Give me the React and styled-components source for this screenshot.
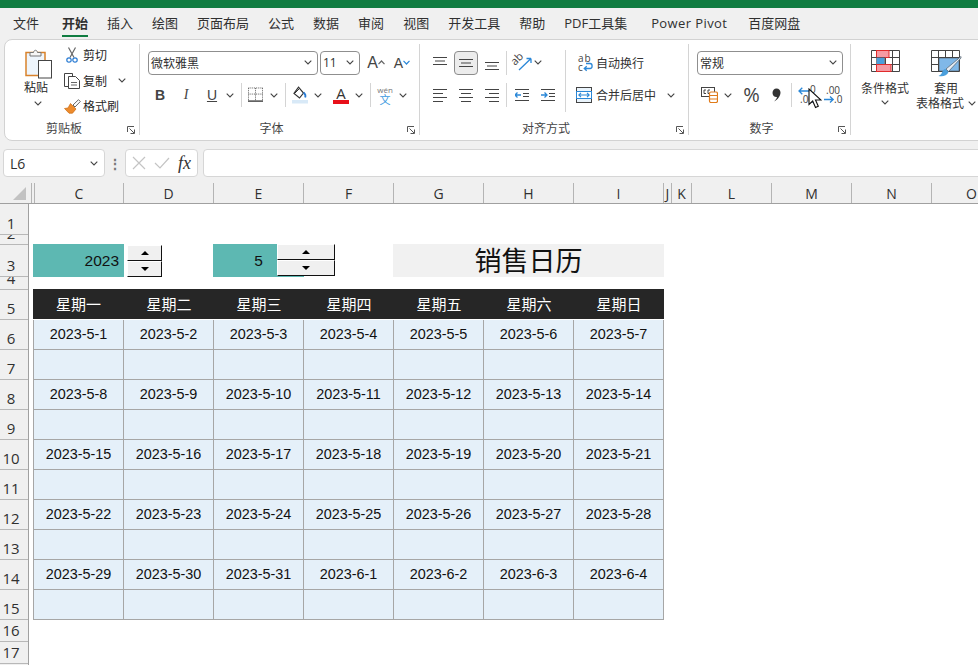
import React from 'react';
import styled, { createGlobalStyle } from 'styled-components';

const UI_FONT = '"Open Sans", "Noto Sans CJK SC", sans-serif';
const CELL_FONT = '"Liberation Sans", "Noto Sans CJK SC", sans-serif';

const GlobalStyle = createGlobalStyle`
  html, body { margin: 0; padding: 0; background: #f0f0f0; }
  body { font-family: ${UI_FONT}; color: #262626; }
`;

const TABS = [
  { name: '文件' }, { name: '开始', active: true, ml: 4 }, { name: '插入' }, { name: '绘图' },
  { name: '页面布局' }, { name: '公式' }, { name: '数据' }, { name: '审阅' }, { name: '视图' },
  { name: '开发工具' }, { name: '帮助' }, { name: 'PDF工具集' },
  { name: 'Power Pivot', ml: 5, wide: true }, { name: '百度网盘', ml: 2 },
];
const COLUMNS = [
  ['C', 89], ['D', 90], ['E', 90], ['F', 90], ['G', 90], ['H', 90], ['I', 90],
  ['J', 8], ['K', 20], ['L', 80], ['M', 80], ['N', 80], ['O', 80],
];
const ROW_HEADS = [
  [1, 31], [2, 10], [3, 32], [4, 13], [5, 30], [6, 30], [7, 30], [8, 30], [9, 30],
  [10, 30], [11, 30], [12, 30], [13, 30], [14, 30], [15, 30], [16, 22], [17, 22],
];
const WEEKDAYS = ['星期一', '星期二', '星期三', '星期四', '星期五', '星期六', '星期日'];
const WEEKS = [
  ['2023-5-1', '2023-5-2', '2023-5-3', '2023-5-4', '2023-5-5', '2023-5-6', '2023-5-7'],
  ['2023-5-8', '2023-5-9', '2023-5-10', '2023-5-11', '2023-5-12', '2023-5-13', '2023-5-14'],
  ['2023-5-15', '2023-5-16', '2023-5-17', '2023-5-18', '2023-5-19', '2023-5-20', '2023-5-21'],
  ['2023-5-22', '2023-5-23', '2023-5-24', '2023-5-25', '2023-5-26', '2023-5-27', '2023-5-28'],
  ['2023-5-29', '2023-5-30', '2023-5-31', '2023-6-1', '2023-6-2', '2023-6-3', '2023-6-4'],
];

/* ---------- icons ---------- */
const Chevron = ({ color = '#444' }) => (
  <svg width="8" height="5" viewBox="0 0 8 5"><path d="M.7.7 4 4 7.3.7" fill="none" stroke={color} strokeWidth="1.1" /></svg>
);
const PasteIcon = () => (
  <svg width="28" height="31" viewBox="0 0 28 31">
    <rect x="1" y="4.500" width="19" height="23" fill="#eef5fc" stroke="#d9822b" strokeWidth="1.500" />
    <path d="M5 8V4.500h3.500C9 1.500 12 1.500 12.500 4.500H16V8z" fill="#f6f6f6" stroke="#777" />
    <rect x="13.500" y="12.500" width="13" height="17.500" fill="#fff" stroke="#444" />
  </svg>
);
const CutIcon = () => (
  <svg width="12" height="16" viewBox="0 0 12 16">
    <path d="M2.500 .5 8 10.500M9.500 .5 4 10.500" fill="none" stroke="#666" strokeWidth="1.200" />
    <circle cx="3" cy="13" r="2.200" fill="none" stroke="#2b7cd3" strokeWidth="1.200" />
    <circle cx="9" cy="13" r="2.200" fill="none" stroke="#2b7cd3" strokeWidth="1.200" />
  </svg>
);
const CopyIcon = () => (
  <svg width="17" height="16" viewBox="0 0 17 16">
    <path d="M4 13.500H.5V.5h8V3" fill="#fff" stroke="#444" />
    <path d="M4.500 3.500h7l4 4v8h-11z" fill="#fff" stroke="#444" />
    <path d="M7 9.500h6M7 12h6" stroke="#666" />
  </svg>
);
const BrushIcon = () => (
  <svg width="17" height="15" viewBox="0 0 17 15">
    <path d="M9 6 14.500.7l1.800 1.800L11 8z" fill="#fff" stroke="#666" />
    <path d="M6.500 4.500 12 10l-3.500 4.200H5L.5 9.500 4 9z" fill="#ed8b2c" stroke="#c96a12" strokeWidth=".7" />
  </svg>
);
const BorderIcon = () => (
  <svg width="16" height="16" viewBox="0 0 16 16">
    <path d="M.5.5h15M.5.5v13M15.500.5v13M.5 7h15M8 .5v13" stroke="#555" strokeDasharray="1 1" fill="none" />
    <path d="M0 14.500h16" stroke="#222" strokeWidth="1.300" />
  </svg>
);
const FillIcon = () => (
  <svg width="16" height="18" viewBox="0 0 16 18">
    <path d="M6.500 1.200 11.500 7l-4 5L2 7.500z" fill="#fff" stroke="#333" strokeWidth="1.200" />
    <path d="M2.500 7.500 7 3" stroke="#333" />
    <path d="M13.200 11.500c.6-1.600.4-3.200-1.600-5" fill="none" stroke="#2b7cd3" strokeWidth="1.800" />
    <rect x="0" y="14" width="16" height="3.500" fill="#d8e9f7" />
  </svg>
);
const FontStepIcon = ({ up }) => (
  <svg width="7" height="5" viewBox="0 0 7 5">
    <path d={up ? 'M.5 4.200 3.500 1l3 3.200' : 'M.5.8l3 3.200 3-3.200'} fill="none" stroke={up ? '#666' : '#2b88d8'} strokeWidth="1.200" />
  </svg>
);
const Lines = ({ kind }) => {
  const sets = {
    top: [[0, 14, 1], [2, 12, 4.5], [0, 14, 8]],
    middle: [[0, 14, 3], [2, 12, 6.5], [0, 14, 10]],
    bottom: [[0, 14, 6], [2, 12, 9.5], [0, 14, 13]],
    left: [[0, 14, 1], [0, 10, 5], [0, 14, 9], [0, 10, 13]],
    center: [[0, 14, 1], [2, 12, 5], [0, 14, 9], [2, 12, 13]],
    right: [[0, 14, 1], [4, 14, 5], [0, 14, 9], [4, 14, 13]],
  };
  return (
    <svg width="14" height="14" viewBox="0 0 14 14">
      {sets[kind].map(([a, b, y]) => <path key={y} d={`M${a} ${y + 0.5}H${b}`} stroke="#444" />)}
    </svg>
  );
};
const IndentIcon = ({ right }) => (
  <svg width="14" height="12" viewBox="0 0 14 12">
    <path d="M0 .5h14M8 4.500h6M8 7.500h6M0 11.500h14" stroke="#444" />
    <path d={right ? 'M0 6h6M3.500 3.500 6 6 3.500 8.500' : 'M6 6H0M2.500 3.500 0 6l2.500 2.500'} fill="none" stroke="#2b88d8" strokeWidth="1.300" />
  </svg>
);
const OrientationIcon = () => (
  <svg width="18" height="17" viewBox="0 0 18 17" overflow="visible">
    <text x="1" y="12" fontSize="11" fill="#444" transform="rotate(-45 1 12)" fontFamily="Open Sans">ab</text>
    <path d="M5 16 17 4.500M17 4.500h-4.500M17 4.500V9" fill="none" stroke="#2b88d8" strokeWidth="1.300" />
  </svg>
);
const WrapIcon = () => (
  <svg width="15" height="17" viewBox="0 0 15 17" overflow="visible">
    <text x="0" y="8" fontSize="10" letterSpacing="1" fill="#444" fontFamily="Open Sans">ab</text>
    <text x="0" y="16.500" fontSize="10" fill="#444" fontFamily="Open Sans">c</text>
    <path d="M8 9.500h4c2.800 0 2.800 5 0 5H6.500M8.700 12.300 6.300 14.500l2.400 2.200" fill="none" stroke="#2b88d8" strokeWidth="1.300" />
  </svg>
);
const MergeIcon = () => (
  <svg width="16" height="16" viewBox="0 0 16 16">
    <rect x=".5" y=".5" width="15" height="15" fill="#eaf4fc" stroke="#444" />
    <rect x=".5" y="4.500" width="15" height="7" fill="#fff" stroke="#2b88d8" />
    <path d="M3 8h10M5 5.800 2.800 8 5 10.200M11 5.800 13.200 8 11 10.200" fill="none" stroke="#2b88d8" strokeWidth="1.100" />
  </svg>
);
const AccountingIcon = () => (
  <svg width="17" height="16" viewBox="0 0 17 16">
    <rect x=".5" y=".5" width="13" height="9" fill="#fff" stroke="#444" />
    <path d="M5 3H3v3.500h2M9 3H7v3.500h2" fill="none" stroke="#444" />
    <rect x="8.500" y="5" width="8" height="10.500" rx="1.500" fill="#fff" stroke="#e07b1a" strokeWidth="1.200" />
    <path d="M8.500 8.500h8M8.500 12h8" stroke="#e07b1a" />
  </svg>
);
const CommaIcon = () => (
  <svg width="9" height="14" viewBox="0 0 9 14">
    <path d="M4.500 .5C7 .5 8.500 2.200 8.500 4.500c0 3.500-2.500 7-6.500 9 1.500-1.500 2.700-3 3-4.500C2.500 9.300.5 7.500.5 5 .5 2.300 2.200.5 4.500.5z" fill="#333" />
  </svg>
);
const DecimalIcon = ({ more }) => (
  <svg width="17" height="18" viewBox="0 0 17 18" overflow="visible">
    {more ? (
      <>
        <path d="M11 5H1M4.300 1.700 1 5l3.300 3.300" fill="none" stroke="#2b88d8" strokeWidth="1.300" />
        <text x="12" y="7" fontSize="10" fill="#444" fontFamily="Open Sans">0</text>
        <text x="2" y="17" fontSize="10" fill="#444" fontFamily="Open Sans">.00</text>
      </>
    ) : (
      <>
        <text x="2" y="8" fontSize="10" fill="#444" fontFamily="Open Sans">.00</text>
        <path d="M0 13.500h9M6 10.500l3.200 3L6 16.500" fill="none" stroke="#2b88d8" strokeWidth="1.300" />
        <text x="10" y="17" fontSize="10" fill="#444" fontFamily="Open Sans">.0</text>
      </>
    )}
  </svg>
);
const GridLines = () => (
  <path d="M.5.5h28v21H.5zM.5 7.500h28M.5 14.500h28M7.500.5v21M14.500.5v21M21.500.5v21" fill="none" stroke="#444" />
);
const ConditionalIcon = () => (
  <svg width="29" height="22" viewBox="0 0 29 22">
    <GridLines />
    <rect x="5.500" y=".5" width="12.500" height="7" fill="#f59aa3" stroke="#e02b2b" />
    <rect x="5.500" y="7.500" width="8" height="7" fill="#4a9fdc" stroke="#444" strokeWidth=".5" />
    <rect x="5.500" y="14.500" width="14.500" height="7" fill="#f59aa3" stroke="#e02b2b" />
  </svg>
);
const TableStyleIcon = () => (
  <svg width="31" height="28" viewBox="0 0 31 28">
    <GridLines />
    <rect x="8" y="8" width="20" height="13" fill="#80b8e8" stroke="#444" strokeWidth=".5" />
    <path d="M30 6.500 15 19l2.500 2.500L30 8z" fill="#e8eef4" stroke="#5a6a78" strokeWidth=".8" />
    <path d="M14.500 19c-3 .5-3 3-4 4.500-.5 1-2 2-3 2.500 4 1 8.500 0 10-4z" fill="#4a9fdc" />
  </svg>
);
const LauncherIcon = () => (
  <svg width="8" height="8" viewBox="0 0 8 8">
    <path d="M.5 6V.5H7M2.500 2.500 7 7M3.500 7.500h4v-4" fill="none" stroke="#555" />
  </svg>
);
const CursorIcon = () => (
  <svg width="14" height="21" viewBox="0 0 14 21">
    <path d="M1 1v15.500l3.700-3.500 2.800 6.500 2.800-1.200-2.800-6.300H13z" fill="#fff" stroke="#111" strokeWidth="1.100" />
  </svg>
);
const CancelIcon = () => (
  <svg width="14" height="14" viewBox="0 0 14 14"><path d="M1 1l12 12M13 1 1 13" stroke="#c4c4c4" strokeWidth="1.200" /></svg>
);
const EnterIcon = () => (
  <svg width="16" height="12" viewBox="0 0 16 12"><path d="M1 6l5 5L15 1" fill="none" stroke="#c4c4c4" strokeWidth="1.200" /></svg>
);

/* ---------- shell ---------- */
const Page = styled.div`
  width: 978px;
  height: 665px;
  position: relative;
  overflow: hidden;
  background: #f0f0f0;
  font-size: 12px;
`;
const TitleBar = styled.div`
  height: 8px;
  background: #107c41;
`;
const TabBar = styled.div`
  height: 31px;
  display: flex;
  gap: 19px;
  padding-left: 13px;
  box-sizing: border-box;
`;
const Tab = styled.div`
  height: 27px;
  margin-left: ${p => p.$ml || 0}px;
  font-size: 13px;
  line-height: 30px;
  white-space: nowrap;
  font-weight: ${p => (p.$active ? 700 : 400)};
  letter-spacing: ${p => (p.$wide ? '.4px' : 'normal')};
  border-bottom: 2px solid ${p => (p.$active ? '#107c41' : 'transparent')};
  color: #303030;
`;
const RibbonWrap = styled.div`
  height: 102px;
  margin-left: 4px;
  width: 1000px;
  box-sizing: border-box;
  background: #fff;
  border: 1px solid #d2d2d2;
  border-radius: 8px;
  display: flex;
`;
const GroupDivider = styled.div`
  width: 1px;
  height: 91px;
  margin-top: 4px;
  background: #d4d4d4;
  flex: none;
`;
const Group = styled.section`
  width: ${p => p.$w}px;
  flex: none;
  display: flex;
  flex-direction: column;
`;
const GroupBody = styled.div`
  display: flex;
  flex-direction: ${p => (p.$row ? 'row' : 'column')};
  padding-top: ${p => p.$top ?? 10}px;
  padding-left: ${p => p.$left ?? 0}px;
  ${p => !p.$row && 'gap: 8px;'}
`;
const GroupFoot = styled.div`
  margin-top: auto;
  margin-bottom: 3px;
  height: 16px;
  display: flex;
  align-items: center;
`;
const GroupLabel = styled.div`
  flex: 1;
  text-align: center;
  font-size: 12px;
  line-height: 16px;
  color: #444;
`;
const Launcher = styled.div`
  width: 16px;
  flex: none;
  display: flex;
  justify-content: center;
  padding-top: 2px;
`;
const ToolRow = styled.div`
  display: flex;
  align-items: center;
  height: ${p => p.$h || 24}px;
`;
const Tool = styled.div`
  width: ${p => (p.$w ? `${p.$w}px` : 'auto')};
  height: 24px;
  margin-left: ${p => p.$ml || 0}px;
  flex: none;
  display: flex;
  align-items: center;
  justify-content: center;
  color: #333;
  white-space: nowrap;
`;
const ActiveTool = styled.div`
  width: 22px;
  height: 22px;
  border: 1px solid #8c8c8c;
  border-radius: 4px;
  background: #ececec;
  display: flex;
  align-items: center;
  justify-content: center;
`;
const ToolSep = styled.div`
  width: 1px;
  height: 24px;
  background: #d4d4d4;
  flex: none;
  margin-left: ${p => p.$ml ?? 6}px;
  margin-right: ${p => p.$mr ?? 6}px;
`;
const Glyph = styled.span`
  font-family: ${p => {
    if (p.$serif) return '"Liberation Serif", serif';
    return p.$ui ? '"Open Sans", sans-serif' : '"Liberation Sans", sans-serif';
  }};
  font-size: ${p => p.$size || 14}px;
  font-weight: ${p => (p.$bold ? 700 : 400)};
  font-style: ${p => (p.$italic ? 'italic' : 'normal')};
  text-decoration: ${p => (p.$under ? 'underline' : 'none')};
  color: #444;
  line-height: 1;
`;
const FontColor = styled.div`
  display: flex;
  flex-direction: column;
  align-items: center;
  width: 16px;
  font-size: 15px;
  line-height: 14px;
  color: #333;
  &::after {
    content: '';
    width: 16px;
    height: 4px;
    background: #e8101a;
    margin-top: 0;
  }
`;
const PhoneticStack = styled.div`
  display: flex;
  flex-direction: column;
  align-items: center;
  font-size: 8px;
  line-height: 8px;
  color: #777;
  & > b {
    font-size: 11px;
    font-weight: 400;
    color: #3d9be0;
    line-height: 11px;
  }
`;
const ToolText = styled.span`
  font-size: 12px;
  color: #333;
  margin-left: ${p => p.$ml || 0}px;
`;
const Select = styled.div`
  width: ${p => p.$w}px;
  height: 24px;
  margin-left: ${p => p.$ml || 0}px;
  box-sizing: border-box;
  border: 1px solid #8f8f8f;
  border-radius: 4px;
  display: flex;
  align-items: center;
  justify-content: space-between;
  padding: 0 5px 0 2px;
  font-size: 12px;
  color: #303030;
  flex: none;
  background: #fff;
`;
const PasteCol = styled.div`
  width: 58px;
  display: flex;
  flex-direction: column;
  align-items: center;
  padding-top: 5px;
  padding-left: 4px;
  box-sizing: border-box;
  font-size: 12px;
  & > svg:first-child { margin-left: 5px; }
  & > span { margin-top: -1px; line-height: 20px; }
  & > svg:last-child { margin-top: 3px; margin-left: 3px; }
`;
const ClipActions = styled.div`
  display: flex;
  flex-direction: column;
  gap: 1px;
`;
const ClipAction = styled.div`
  display: flex;
  align-items: center;
  height: 24.500px;
  font-size: 12px;
`;
const ClipIconBox = styled.div`
  width: 18px;
  display: flex;
  justify-content: center;
  margin-right: 2px;
`;
const VDivider = styled.div`
  width: 1px;
  height: 62px;
  background: #d4d4d4;
  margin-right: 10px;
  flex: none;
`;
const Stack = styled.div`
  display: flex;
  flex-direction: column;
  gap: 8px;
  width: ${p => (p.$w ? `${p.$w}px` : 'auto')};
`;
const BigButton = styled.div`
  width: ${p => p.$w}px;
  display: flex;
  flex-direction: column;
  align-items: center;
  flex: none;
  font-size: 12px;
  line-height: 15px;
  color: #333;
  white-space: nowrap;
  & > svg:last-child { margin-top: 4px; }
`;
const BigIcon = styled.div`
  height: 31px;
  display: flex;
  align-items: flex-start;
`;
const Inline = styled.span`
  display: inline-flex;
  align-items: center;
  gap: 4px;
`;

/* ---------- formula bar ---------- */
const FormulaBar = styled.div`
  display: flex;
  align-items: flex-start;
  height: 36px;
  padding-top: 8px;
  box-sizing: border-box;
`;
const NameBox = styled.div`
  width: 102px;
  height: 28px;
  margin-left: 3px;
  flex: none;
  box-sizing: border-box;
  background: #fff;
  border: 1px solid #d6d6d6;
  border-radius: 4px;
  display: flex;
  align-items: center;
  justify-content: space-between;
  padding: 0 6px;
  font-size: 14px;
  color: #303030;
`;
const Dots = styled.div`
  width: 20px;
  height: 28px;
  flex: none;
  display: flex;
  align-items: center;
  justify-content: center;
  font-size: 14px;
  font-weight: 700;
  color: #777;
`;
const FxBox = styled.div`
  width: 73px;
  height: 28px;
  flex: none;
  box-sizing: border-box;
  background: #fff;
  border: 1px solid #d6d6d6;
  border-radius: 4px;
  display: flex;
  align-items: center;
  gap: 8px;
  padding-left: 6px;
`;
const FxMark = styled.i`
  font-family: "Liberation Serif", serif;
  font-size: 18px;
  font-weight: 400;
  color: #333;
`;
const FormulaInput = styled.div`
  width: 800px;
  height: 28px;
  margin-left: 5px;
  flex: none;
  box-sizing: border-box;
  background: #fff;
  border: 1px solid #d6d6d6;
  border-radius: 4px;
`;

/* ---------- sheet ---------- */
const ColumnHeader = styled.div`
  display: flex;
  align-items: flex-end;
  height: 27px;
  box-sizing: border-box;
  border-bottom: 1px solid #a0a0a0;
`;
const Corner = styled.div`
  width: 29px;
  height: 20px;
  flex: none;
  box-sizing: border-box;
  padding: 4px 0 0 13px;
`;
const ColCell = styled.div`
  width: ${p => p.$w}px;
  height: 20px;
  flex: none;
  box-sizing: border-box;
  border-right: 1px solid #b4b4b4;
  text-align: center;
  font-size: 14px;
  line-height: 22px;
  color: #303030;
  overflow: hidden;
`;
const SheetBody = styled.div`
  display: flex;
  height: 461px;
  position: relative;
`;
const RowHeader = styled.div`
  width: 29px;
  flex: none;
  box-sizing: border-box;
  border-right: 1px solid #a0a0a0;
`;
const RowCell = styled.div`
  height: ${p => p.$h}px;
  box-sizing: border-box;
  border-bottom: 1px solid #b8b8b8;
  display: flex;
  align-items: flex-end;
  justify-content: center;
  overflow: hidden;
  font-size: 15px;
  line-height: 20px;
  color: #303030;
  padding: 0 6px 1px 0;
`;
const Canvas = styled.div`
  flex: 1;
  background: #fff;
  padding-left: 4px;
  font-family: ${CELL_FONT};
  color: #111;
`;
const BlankRow = styled.div`
  height: ${p => p.$h}px;
`;
const ControlRow = styled.div`
  display: grid;
  grid-template-columns: 91px 89px 91px 89px 271px;
  grid-template-rows: 33px;
  height: 33px;
  margin-top: -1px;
`;
const LinkedCell = styled.div`
  background: #5db8b2;
  display: flex;
  align-items: center;
  justify-content: ${p => (p.$center ? 'center' : 'flex-end')};
  padding-right: ${p => (p.$center ? 0 : 5)}px;
  font-size: 15.500px;
  box-sizing: border-box;
`;
const TitleCell = styled.div`
  grid-column: 5;
  background: #f1f1f1;
  display: flex;
  align-items: center;
  justify-content: center;
  font-size: 27px;
  line-height: 31px;
  padding-bottom: 2px;
  box-sizing: border-box;
  font-family: "Noto Sans CJK SC", sans-serif;
  color: #111;
`;
const Calendar = styled.div`
  display: grid;
  width: 631px;
  grid-template-columns: 91px repeat(6, 90px);
  grid-template-rows: 31px;
  grid-auto-rows: 30px;
  margin-top: 12px;
`;
const WeekHead = styled.div`
  background: #262626;
  color: #fff;
  box-sizing: border-box;
  height: 30px;
  padding-bottom: 2px;
  display: flex;
  align-items: center;
  justify-content: center;
  font-size: 15px;
`;
const DayCell = styled.div`
  box-sizing: border-box;
  background: #e5f0f9;
  border-right: 1px solid #a6a6a6;
  border-bottom: 1px solid #a6a6a6;
  ${p => p.$first && 'border-left: 1px solid #a6a6a6;'}
  display: flex;
  align-items: center;
  justify-content: center;
  font-size: 14.400px;
  padding-bottom: 1px;
  color: #111;
`;
const Spinner = styled.div`
  position: absolute;
  left: ${p => p.$x}px;
  top: ${p => p.$y}px;
  width: ${p => p.$w}px;
  height: 32px;
  display: flex;
  flex-direction: column;
  z-index: 2;
`;
const SpinButton = styled.div`
  flex: 1;
  background: #f0f0f0;
  box-sizing: border-box;
  border-top: 1px solid #fff;
  border-left: 1px solid #fff;
  border-right: 1px solid #111;
  border-bottom: 1px solid #111;
  display: flex;
  align-items: center;
  justify-content: center;
  &::after {
    content: '';
    border-left: 4px solid transparent;
    border-right: 4px solid transparent;
    ${p => (p.$down ? 'border-top: 4px solid #000;' : 'border-bottom: 4px solid #000;')}
  }
`;
const Pointer = styled.div`
  position: absolute;
  left: 808px;
  top: 88px;
  z-index: 5;
  line-height: 0;
`;

const Spin = props => (
  <Spinner {...props}>
    <SpinButton />
    <SpinButton $down />
  </Spinner>
);

const Foot = ({ label }) => (
  <GroupFoot>
    <GroupLabel>{label}</GroupLabel>
    <Launcher><LauncherIcon /></Launcher>
  </GroupFoot>
);

const Ribbon = () => (
  <RibbonWrap>
    <Group $w={134}>
      <GroupBody $row $top={3}>
        <PasteCol>
          <PasteIcon />
          <span>粘贴</span>
          <Chevron />
        </PasteCol>
        <ClipActions>
          <ClipAction><ClipIconBox><CutIcon /></ClipIconBox>剪切</ClipAction>
          <ClipAction>
            <ClipIconBox><CopyIcon /></ClipIconBox>复制
            <Tool $w={10} $ml={10}><Chevron /></Tool>
          </ClipAction>
          <ClipAction><ClipIconBox><BrushIcon /></ClipIconBox>格式刷</ClipAction>
        </ClipActions>
      </GroupBody>
      <Foot label="剪贴板" />
    </Group>
    <GroupDivider />
    <Group $w={279}>
      <GroupBody $left={7}>
        <ToolRow $h={25}>
          <Select $w={170} $ml={1}>微软雅黑<Chevron /></Select>
          <Select $w={40} $ml={2}>11<Chevron /></Select>
          <Tool $w={18} $ml={7}><Glyph $size={16}>A</Glyph><FontStepIcon up /></Tool>
          <Tool $w={18} $ml={8}><Glyph $size={14}>A</Glyph><FontStepIcon /></Tool>
        </ToolRow>
        <ToolRow>
          <Tool $w={26}><Glyph $bold>B</Glyph></Tool>
          <Tool $w={26}><Glyph $italic $serif>I</Glyph></Tool>
          <Tool $w={26}><Glyph $under>U</Glyph></Tool>
          <Tool $w={10}><Chevron /></Tool>
          <ToolSep />
          <Tool $w={15}><BorderIcon /></Tool>
          <Tool $w={10} $ml={6}><Chevron /></Tool>
          <ToolSep />
          <Tool $w={16}><FillIcon /></Tool>
          <Tool $w={10} $ml={5}><Chevron /></Tool>
          <Tool $w={18} $ml={9}><FontColor>A</FontColor></Tool>
          <Tool $w={10} $ml={4}><Chevron /></Tool>
          <ToolSep />
          <Tool $w={16}><PhoneticStack>wén<b>文</b></PhoneticStack></Tool>
          <Tool $w={10} $ml={5}><Chevron /></Tool>
        </ToolRow>
      </GroupBody>
      <Foot label="字体" />
    </Group>
    <GroupDivider />
    <Group $w={268}>
      <GroupBody $row $left={7}>
        <Stack $w={138}>
          <ToolRow $h={25}>
            <Tool $w={26}><Lines kind="top" /></Tool>
            <Tool $w={26}><ActiveTool><Lines kind="middle" /></ActiveTool></Tool>
            <Tool $w={26}><Lines kind="bottom" /></Tool>
            <ToolSep $ml={1} $mr={7} />
            <Tool $w={18}><OrientationIcon /></Tool>
            <Tool $w={10} $ml={1}><Chevron /></Tool>
          </ToolRow>
          <ToolRow>
            <Tool $w={26}><Lines kind="left" /></Tool>
            <Tool $w={26}><Lines kind="center" /></Tool>
            <Tool $w={26}><Lines kind="right" /></Tool>
            <ToolSep $ml={1} $mr={2} />
            <Tool $w={26}><IndentIcon /></Tool>
            <Tool $w={26}><IndentIcon right /></Tool>
          </ToolRow>
        </Stack>
        <VDivider />
        <Stack>
          <ToolRow $h={25}>
            <Tool $w={16} $ml={1}><WrapIcon /></Tool>
            <ToolText $ml={3}>自动换行</ToolText>
          </ToolRow>
          <ToolRow>
            <Tool $w={16}><MergeIcon /></Tool>
            <ToolText $ml={4}>合并后居中</ToolText>
            <Tool $w={10} $ml={10}><Chevron /></Tool>
          </ToolRow>
        </Stack>
      </GroupBody>
      <Foot label="对齐方式" />
    </Group>
    <GroupDivider />
    <Group $w={161}>
      <GroupBody $left={8}>
        <ToolRow $h={25}>
          <Select $w={146}>常规<Chevron /></Select>
        </ToolRow>
        <ToolRow>
          <Tool $w={17} $ml={4}><AccountingIcon /></Tool>
          <Tool $w={10} $ml={5}><Chevron /></Tool>
          <Tool $w={15} $ml={11}><Glyph $ui $size={20}>%</Glyph></Tool>
          <Tool $w={9} $ml={13}><CommaIcon /></Tool>
          <ToolSep $ml={10} $mr={6} />
          <Tool $w={17}><DecimalIcon more /></Tool>
          <Tool $w={17} $ml={9}><DecimalIcon /></Tool>
        </ToolRow>
      </GroupBody>
      <Foot label="数字" />
    </Group>
    <GroupDivider />
    <Group $w={200}>
      <GroupBody $row $left={4} $top={10}>
        <BigButton $w={60}>
          <BigIcon><ConditionalIcon /></BigIcon>
          条件格式
          <Chevron />
        </BigButton>
        <BigButton $w={62}>
          <BigIcon><TableStyleIcon /></BigIcon>
          套用
          <Inline>表格格式<Chevron /></Inline>
        </BigButton>
      </GroupBody>
    </Group>
  </RibbonWrap>
);

const Sheet = () => (
  <>
    <ColumnHeader>
      <Corner>
        <svg width="13" height="13" viewBox="0 0 13 13"><path d="M13 0v13H0z" fill="#c2c2c2" /></svg>
      </Corner>
      <ColCell $w={3} />
      <ColCell $w={3} />
      {COLUMNS.map(([name, width]) => <ColCell key={name} $w={width}>{name}</ColCell>)}
    </ColumnHeader>
    <SheetBody>
      <RowHeader>
        {ROW_HEADS.map(([n, h]) => <RowCell key={n} $h={h}>{n}</RowCell>)}
      </RowHeader>
      <Canvas>
        <BlankRow $h={41} />
        <ControlRow>
          <LinkedCell>2023</LinkedCell>
          <div />
          <LinkedCell $center>5</LinkedCell>
          <div />
          <TitleCell>销售日历</TitleCell>
        </ControlRow>
        <Calendar>
          {WEEKDAYS.map(day => <WeekHead key={day}>{day}</WeekHead>)}
          {WEEKS.map((week, i) => (
            <React.Fragment key={i}>
              {week.map((date, j) => <DayCell key={date} $first={j === 0}>{date}</DayCell>)}
              {week.map((date, j) => <DayCell key={`${date}-blank`} $first={j === 0} />)}
            </React.Fragment>
          ))}
        </Calendar>
      </Canvas>
      <Spin $x={127} $y={41} $w={35} />
      <Spin $x={277} $y={40} $w={58} />
    </SheetBody>
  </>
);

export default function App() {
  return (
    <Page>
      <GlobalStyle />
      <TitleBar />
      <TabBar>
        {TABS.map(tab => (
          <Tab key={tab.name} $active={tab.active} $ml={tab.ml} $wide={tab.wide}>{tab.name}</Tab>
        ))}
      </TabBar>
      <Ribbon />
      <FormulaBar>
        <NameBox>L6<Chevron /></NameBox>
        <Dots>⋮</Dots>
        <FxBox><CancelIcon /><EnterIcon /><FxMark>fx</FxMark></FxBox>
        <FormulaInput />
      </FormulaBar>
      <Sheet />
      <Pointer><CursorIcon /></Pointer>
    </Page>
  );
}
